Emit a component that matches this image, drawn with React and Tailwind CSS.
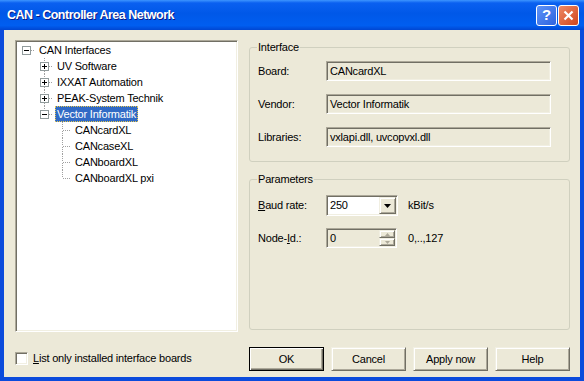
import React from 'react';

const sunken =
  'border border-t-[#ACA899] border-l-[#ACA899] border-r-white border-b-white shadow-[inset_1px_1px_0_#716F64,inset_-1px_-1px_0_#F1EFE2]';
const raised =
  'border border-t-[#F1EFE2] border-l-[#F1EFE2] border-r-[#716F64] border-b-[#716F64] shadow-[inset_1px_1px_0_#fff,inset_-1px_-1px_0_#ACA899]';

// one 18x16 connector cell of the tree
function Cell({ up, down, right, box }) {
  const dot = { stroke: '#A0A0A0', strokeDasharray: '1 1' };
  return (
    <svg width="18" height="16" className="shrink-0">
      {up && <line x1="9.5" y1="0" x2="9.5" y2="8" {...dot} />}
      {down && <line x1="9.5" y1="9" x2="9.5" y2="16" {...dot} />}
      {right && <line x1="10" y1="8.5" x2="18" y2="8.5" {...dot} />}
      {box && (
        <g>
          <rect x="5.5" y="4.5" width="8" height="8" fill="#fff" stroke="#919B9C" />
          <line x1="7" y1="8.5" x2="12" y2="8.5" stroke="#000" />
          {box === 'plus' && <line x1="9.5" y1="6" x2="9.5" y2="11" stroke="#000" />}
        </g>
      )}
    </svg>
  );
}

const rows = [
  { label: 'CAN Interfaces', cells: [{ right: true, box: 'minus' }] },
  { label: 'UV Software', cells: [{}, { up: true, down: true, right: true, box: 'plus' }] },
  { label: 'IXXAT Automation', cells: [{}, { up: true, down: true, right: true, box: 'plus' }] },
  { label: 'PEAK-System Technik', cells: [{}, { up: true, down: true, right: true, box: 'plus' }] },
  { label: 'Vector Informatik', selected: true, cells: [{}, { up: true, right: true, box: 'minus' }] },
  { label: 'CANcardXL', cells: [{}, {}, { up: true, down: true, right: true }] },
  { label: 'CANcaseXL', cells: [{}, {}, { up: true, down: true, right: true }] },
  { label: 'CANboardXL', cells: [{}, {}, { up: true, down: true, right: true }] },
  { label: 'CANboardXL pxi', cells: [{}, {}, { up: true, right: true }] },
];

function Tree() {
  return (
    <div className={`${sunken} bg-white w-[223px] h-[292px] pl-[1px] pt-[1px]`}>
      {rows.map((r) => (
        <div key={r.label} className="flex items-center h-[16px]">
          {r.cells.map((c, i) => (
            <Cell key={i} {...c} />
          ))}
          <span
            className={
              r.selected
                ? 'ml-[2px] px-[1px] h-[16px] leading-[14px] bg-[#316AC5] text-white border border-dotted border-[#E8C850]'
                : 'ml-[2px] px-[2px] leading-[16px]'
            }
          >
            {r.label}
          </span>
        </div>
      ))}
    </div>
  );
}

function Field({ label, value }) {
  return (
    <div className="flex items-center h-[20px]">
      <span className="w-[68px]">{label}</span>
      <div className={`${sunken} w-[225px] h-[20px] pl-[3px] leading-[18px] bg-[#ECE9D8]`}>{value}</div>
    </div>
  );
}

function Btn({ children, def }) {
  return (
    <button
      className={
        def
          ? 'w-[75px] h-[24px] border border-black bg-[#ECE9D8] shadow-[inset_1px_1px_0_#fff,inset_-1px_-1px_0_#716F64,inset_-2px_-2px_0_#ACA899]'
          : `w-[75px] h-[24px] bg-[#ECE9D8] ${raised}`
      }
    >
      {children}
    </button>
  );
}

export default function App() {
  return (
    <div
      className="w-[584px] h-[381px] flex flex-col bg-[#0B4BDC] text-[11px] tracking-[-0.2px] text-black"
      style={{ fontFamily: '"Liberation Sans", Arial, sans-serif' }}
    >
      {/* title bar */}
      <div className="h-[30px] shrink-0 flex items-center justify-between pl-[7px] pr-[5px] bg-[linear-gradient(to_bottom,#3D95FF_0%,#0A60F0_10%,#0058E8_45%,#005EF0_85%,#0046D2_100%)]">
        <span className="text-white font-bold text-[12.5px] tracking-[-0.5px] [text-shadow:1px_1px_0_#0A1883]">
          CAN - Controller Area Network
        </span>
        <div className="flex gap-[1px]">
          <div className="w-[21px] h-[21px] rounded-[3px] border border-white bg-[linear-gradient(135deg,#5E93F7,#2D63DF)] flex items-center justify-center text-white font-bold text-[15px]">
            ?
          </div>
          <div className="w-[21px] h-[21px] rounded-[3px] border border-white bg-[linear-gradient(135deg,#EE8A66,#D1451C)] flex items-center justify-center">
            <svg width="11" height="11" viewBox="0 0 11 11">
              <path d="M1.5 1.5 L9.5 9.5 M9.5 1.5 L1.5 9.5" stroke="#fff" strokeWidth="2.2" />
            </svg>
          </div>
        </div>
      </div>

      {/* client area */}
      <div className="flex-1 mx-[4px] mb-[4px] bg-[#ECE9D8] pl-[11px] pr-[10px] pt-[10px] flex flex-col">
        <div className="flex gap-[11px]">
          <Tree />
          <div className="flex-1 flex flex-col">
            <fieldset className="border border-[#D0D0BF] rounded-[3px] h-[121px] mt-[1px] px-[8px] pt-[7px]">
              <legend className="-ml-[1px] px-[1px] leading-[13px]">Interface</legend>
              <div className="flex flex-col gap-[13px]">
                <Field label="Board:" value="CANcardXL" />
                <Field label="Vendor:" value="Vector Informatik" />
                <Field label="Libraries:" value="vxlapi.dll, uvcopvxl.dll" />
              </div>
            </fieldset>
            <fieldset className="border border-[#D0D0BF] rounded-[3px] h-[157px] mt-[11px] px-[8px] pt-[9px]">
              <legend className="-ml-[1px] px-[1px] leading-[13px]">Parameters</legend>
              <div className="flex items-center h-[21px]">
                <span className="w-[68px]">
                  <u>B</u>aud rate:
                </span>
                <div className={`${sunken} bg-white w-[72px] h-[21px] flex items-center justify-between pl-[3px] pr-[1px]`}>
                  <span>250</span>
                  <div className={`${raised} bg-[#ECE9D8] w-[17px] h-[17px] flex items-center justify-center`}>
                    <svg width="7" height="4">
                      <path d="M0 0 H7 L3.5 4 Z" fill="#000" />
                    </svg>
                  </div>
                </div>
                <span className="ml-[10px]">kBit/s</span>
              </div>
              <div className="flex items-center h-[20px] mt-[12px]">
                <span className="w-[68px]">
                  Node-<u>I</u>d.:
                </span>
                <div className={`${sunken} bg-[#ECE9D8] w-[71px] h-[20px] flex items-center justify-between pl-[3px] pr-[1px]`}>
                  <span>0</span>
                  <div className="flex flex-col w-[16px] h-[16px]">
                    <div className={`${raised} bg-[#ECE9D8] h-[8px] flex items-center justify-center`}>
                      <svg width="5" height="3">
                        <path d="M2.5 0 L5 3 H0 Z" fill="#ACA899" />
                      </svg>
                    </div>
                    <div className={`${raised} bg-[#ECE9D8] h-[8px] flex items-center justify-center`}>
                      <svg width="5" height="3">
                        <path d="M0 0 H5 L2.5 3 Z" fill="#ACA899" />
                      </svg>
                    </div>
                  </div>
                </div>
                <span className="ml-[11px]">0,..,127</span>
              </div>
            </fieldset>
          </div>
        </div>

        <div className="flex items-center justify-between mt-[15px]">
          <div className="flex items-center gap-[5px] -mt-[2px]">
            <div className={`${sunken} bg-white w-[13px] h-[13px]`} />
            <span>
              <u>L</u>ist only installed interface boards
            </span>
          </div>
          <div className="flex gap-[7px]">
            <Btn def>OK</Btn>
            <Btn>Cancel</Btn>
            <Btn>Apply now</Btn>
            <Btn>Help</Btn>
          </div>
        </div>
      </div>
    </div>
  );
}
